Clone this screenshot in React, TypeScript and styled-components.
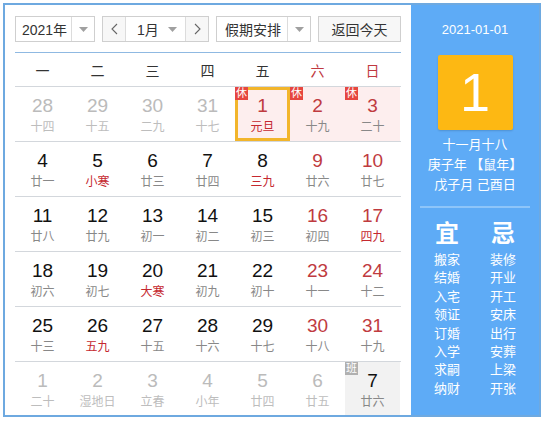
import styled, { createGlobalStyle } from "styled-components";

const GlobalStyle = createGlobalStyle`
  body {
    margin: 0;
    background: #fff;
    font-family: "Liberation Sans", "Noto Sans CJK SC", sans-serif;
  }
`;

type Day = {
  d: number;
  l: string;
  other?: boolean;
  weekend?: boolean;
  festival?: boolean;
  rest?: boolean;
  work?: boolean;
  selected?: boolean;
};

const days: Day[] = [
  { d: 28, l: "十四", other: true },
  { d: 29, l: "十五", other: true },
  { d: 30, l: "二九", other: true },
  { d: 31, l: "十七", other: true },
  { d: 1, l: "元旦", rest: true, festival: true, selected: true, weekend: true },
  { d: 2, l: "十九", rest: true, weekend: true },
  { d: 3, l: "二十", rest: true, weekend: true },
  { d: 4, l: "廿一" },
  { d: 5, l: "小寒", festival: true },
  { d: 6, l: "廿三" },
  { d: 7, l: "廿四" },
  { d: 8, l: "三九", festival: true },
  { d: 9, l: "廿六", weekend: true },
  { d: 10, l: "廿七", weekend: true },
  { d: 11, l: "廿八" },
  { d: 12, l: "廿九" },
  { d: 13, l: "初一" },
  { d: 14, l: "初二" },
  { d: 15, l: "初三" },
  { d: 16, l: "初四", weekend: true },
  { d: 17, l: "四九", weekend: true, festival: true },
  { d: 18, l: "初六" },
  { d: 19, l: "初七" },
  { d: 20, l: "大寒", festival: true },
  { d: 21, l: "初九" },
  { d: 22, l: "初十" },
  { d: 23, l: "十一", weekend: true },
  { d: 24, l: "十二", weekend: true },
  { d: 25, l: "十三" },
  { d: 26, l: "五九", festival: true },
  { d: 27, l: "十五" },
  { d: 28, l: "十六" },
  { d: 29, l: "十七" },
  { d: 30, l: "十八", weekend: true },
  { d: 31, l: "十九", weekend: true },
  { d: 1, l: "二十", other: true },
  { d: 2, l: "湿地日", other: true },
  { d: 3, l: "立春", other: true },
  { d: 4, l: "小年", other: true },
  { d: 5, l: "廿四", other: true },
  { d: 6, l: "廿五", other: true },
  { d: 7, l: "廿六", work: true },
];

const weekNames = ["一", "二", "三", "四", "五", "六", "日"];
const yi = ["搬家", "结婚", "入宅", "领证", "订婚", "入学", "求嗣", "纳财"];
const ji = ["装修", "开业", "开工", "安床", "出行", "安葬", "上梁", "开张"];

const Arrow = () => (
  <svg width="9" height="5" viewBox="0 0 9 5">
    <path d="M0 0 L9 0 L4.5 5 Z" fill="#a0a0a0" />
  </svg>
);

const Chevron = ({ dir }: { dir: "l" | "r" }) => (
  <svg width="7" height="12" viewBox="0 0 7 12">
    <path
      d={dir === "l" ? "M6 1 L1 6 L6 11" : "M1 1 L6 6 L1 11"}
      fill="none"
      stroke="#666"
      strokeWidth="1.1"
    />
  </svg>
);

const App = () => {
  const rows: Day[][] = [];
  for (let i = 0; i < days.length; i += 7) rows.push(days.slice(i, i + 7));

  return (
    <>
      <GlobalStyle />
      <Frame>
        <Main>
          <Toolbar>
            <Select $w={80}>
              <SelectText>2021年</SelectText>
              <ArrowBox>
                <Arrow />
              </ArrowBox>
            </Select>
            <MonthGroup>
              <NavBtn>
                <Chevron dir="l" />
              </NavBtn>
              <MonthText>
                <span>1月</span>
                <Arrow />
              </MonthText>
              <NavBtn $right>
                <Chevron dir="r" />
              </NavBtn>
            </MonthGroup>
            <Select $w={95}>
              <SelectText>假期安排</SelectText>
              <ArrowBox>
                <Arrow />
              </ArrowBox>
            </Select>
            <TodayBtn>返回今天</TodayBtn>
          </Toolbar>
          <Grid>
            <HeadRow>
              {weekNames.map((w, i) => (
                <HeadCell key={w} $weekend={i >= 5}>
                  {w}
                </HeadCell>
              ))}
            </HeadRow>
            {rows.map((r, ri) => (
              <Row key={ri}>
                {r.map((day, ci) => (
                  <Cell key={ci} $rest={day.rest} $work={day.work} $selected={day.selected}>
                    {day.rest && <Badge $sel={day.selected}>休</Badge>}
                    {day.work && <Badge $work>班</Badge>}
                    <Num $other={day.other} $red={day.weekend || (day.rest && !day.other)}>
                      {day.d}
                    </Num>
                    <Lunar $other={day.other} $red={day.festival}>
                      {day.l}
                    </Lunar>
                  </Cell>
                ))}
              </Row>
            ))}
          </Grid>
        </Main>
        <Side>
          <DateText>2021-01-01</DateText>
          <BigDay>1</BigDay>
          <Info>
            <div>十一月十八</div>
            <div>庚子年 【鼠年】</div>
            <div>戊子月 己酉日</div>
          </Info>
          <Divider />
          <Almanac>
            <AlmanacCol>
              <AlmanacTitle>宜</AlmanacTitle>
              {yi.map((t) => (
                <AlmanacItem key={t}>{t}</AlmanacItem>
              ))}
            </AlmanacCol>
            <AlmanacCol>
              <AlmanacTitle>忌</AlmanacTitle>
              {ji.map((t) => (
                <AlmanacItem key={t}>{t}</AlmanacItem>
              ))}
            </AlmanacCol>
          </Almanac>
        </Side>
      </Frame>
    </>
  );
};
export default App;

const Frame = styled.div`
  margin: 3px;
  width: 538px;
  height: 414px;
  box-sizing: border-box;
  border: 2px solid #6ea9e0;
  display: flex;
  overflow: hidden;
`;

const Main = styled.div`
  width: 406px;
  box-sizing: border-box;
  padding: 11px 10px 0 10px;
  background: #fff;
`;

const Toolbar = styled.div`
  display: flex;
  height: 26px;
  gap: 7px;
  color: #333;
  font-size: 14px;
`;

const Select = styled.div<{ $w: number }>`
  width: ${(p) => p.$w}px;
  box-sizing: border-box;
  border: 1px solid #cfcfcf;
  display: flex;
  align-items: center;
  background: #fff;
`;

const SelectText = styled.div`
  flex: 1;
  text-align: center;
  padding-left: 2px;
`;

const ArrowBox = styled.div`
  width: 22px;
  height: 100%;
  border-left: 1px solid #dcdcdc;
  display: flex;
  align-items: center;
  justify-content: center;
`;

const MonthGroup = styled.div`
  width: 107px;
  box-sizing: border-box;
  border: 1px solid #cfcfcf;
  display: flex;
`;

const NavBtn = styled.div<{ $right?: boolean }>`
  width: 22px;
  display: flex;
  align-items: center;
  justify-content: center;
  background: #f7f7f7;
  ${(p) => (p.$right ? "border-left: 1px solid #dcdcdc;" : "border-right: 1px solid #dcdcdc;")}
`;

const MonthText = styled.div`
  flex: 1;
  display: flex;
  align-items: center;
  justify-content: space-between;
  padding: 0 8px 0 11px;
`;

const TodayBtn = styled.div`
  width: 83px;
  box-sizing: border-box;
  border: 1px solid #cfcfcf;
  background: #f7f7f7;
  display: flex;
  align-items: center;
  justify-content: center;
`;

const Grid = styled.div`
  margin-top: 10px;
  border-top: 1px solid #8fb9e2;
`;

const HeadRow = styled.div`
  display: grid;
  grid-template-columns: repeat(7, 55px);
  height: 33px;
`;

const HeadCell = styled.div<{ $weekend?: boolean }>`
  display: flex;
  align-items: center;
  justify-content: center;
  font-size: 14px;
  color: ${(p) => (p.$weekend ? "#c0393f" : "#333")};
`;

const Row = styled.div`
  display: grid;
  grid-template-columns: repeat(7, 55px);
  height: 55px;
  border-top: 1px solid #d3d7dc;
  box-sizing: border-box;
`;

const Cell = styled.div<{ $rest?: boolean; $work?: boolean; $selected?: boolean }>`
  position: relative;
  display: flex;
  flex-direction: column;
  align-items: center;
  box-sizing: border-box;
  padding-top: ${(p) => (p.$selected ? "4px" : "7px")};
  background: ${(p) => (p.$rest ? "#fdeeee" : p.$work ? "#f2f2f2" : "transparent")};
  border: ${(p) => (p.$selected ? "3px solid #f2b52b" : "none")};
`;

const Badge = styled.div<{ $work?: boolean; $sel?: boolean }>`
  position: absolute;
  top: ${(p) => (p.$sel ? "-3px" : "0")};
  left: ${(p) => (p.$sel ? "-3px" : "0")};
  width: 13px;
  height: 13px;
  font-size: 11px;
  line-height: 13px;
  text-align: center;
  color: #fff;
  background: ${(p) => (p.$work ? "#b0b0b0" : "#e6463f")};
`;

const Num = styled.div<{ $other?: boolean; $red?: boolean }>`
  font-size: 19px;
  line-height: 24px;
  color: ${(p) => (p.$other ? "#bbbbbb" : p.$red ? "#bf3b3f" : "#111")};
`;

const Lunar = styled.div<{ $other?: boolean; $red?: boolean }>`
  font-size: 12px;
  line-height: 16px;
  margin-top: 1px;
  color: ${(p) => (p.$other ? "#bdbdbd" : p.$red ? "#c5282f" : "#888")};
`;

const Side = styled.div`
  flex: 1;
  background: #5eabf6;
  color: #fff;
  display: flex;
  flex-direction: column;
  align-items: center;
`;

const DateText = styled.div`
  margin-top: 17px;
  font-size: 13px;
  line-height: 16px;
`;

const BigDay = styled.div`
  margin-top: 17px;
  width: 75px;
  height: 75px;
  background: #fdb813;
  border-radius: 2px;
  box-shadow: 0 1px 2px rgba(0, 0, 0, 0.15);
  font-size: 54px;
  line-height: 75px;
  text-align: center;
`;

const Info = styled.div`
  margin-top: 5px;
  font-size: 13px;
  line-height: 20px;
  text-align: center;
`;

const Divider = styled.div`
  margin-top: 11px;
  width: 110px;
  height: 2px;
  background: #8ec5f9;
`;

const Almanac = styled.div`
  margin-top: 11px;
  display: flex;
  gap: 30px;
`;

const AlmanacCol = styled.div`
  display: flex;
  flex-direction: column;
  align-items: center;
`;

const AlmanacTitle = styled.div`
  font-size: 24px;
  font-weight: bold;
  line-height: 30px;
  margin-bottom: 2px;
`;

const AlmanacItem = styled.div`
  font-size: 13px;
  line-height: 18.4px;
`;
